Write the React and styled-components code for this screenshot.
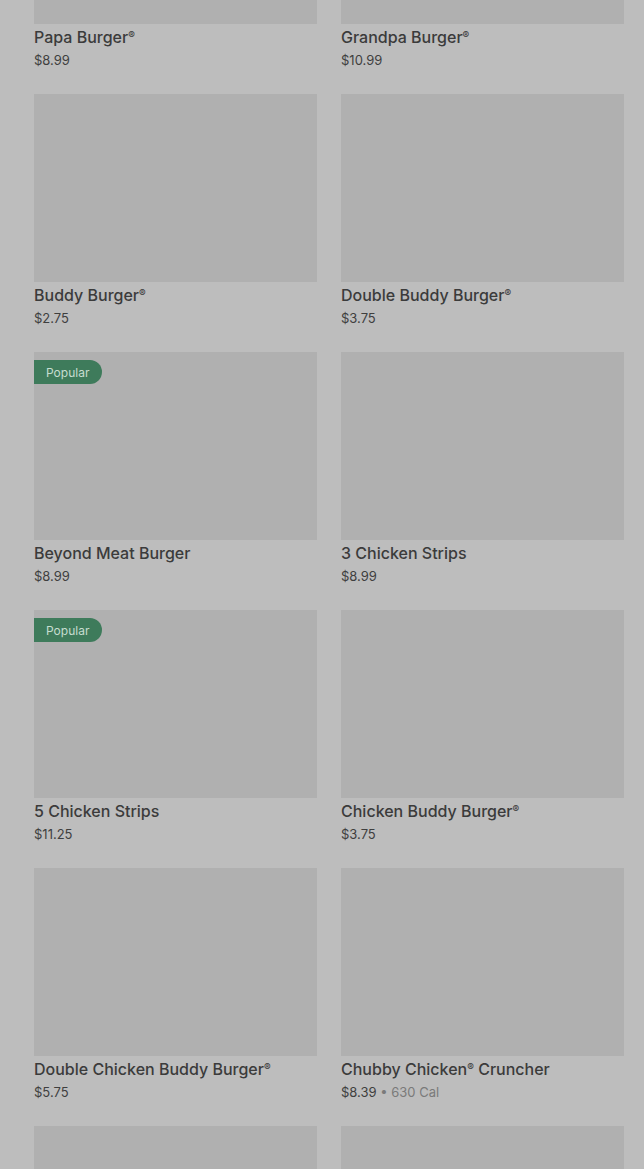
import React from "react";
import styled, { createGlobalStyle } from "styled-components";

const Global = createGlobalStyle`
  html, body { margin: 0; padding: 0; background: #bdbdbd; }
  body { font-family: Inter, "Noto Sans", Arial, sans-serif; overflow: hidden; }
`;

const Page = styled.div`
  width: 644px;
  height: 1169px;
  overflow: hidden;
  background: #bdbdbd;
`;

const Grid = styled.div`
  display: grid;
  grid-template-columns: 1fr 1fr;
  column-gap: 24px;
  row-gap: 23px;
  padding: 0 20px 0 34px;
  margin-top: -164px;
`;

const Card = styled.div`
  display: flex;
  flex-direction: column;
`;

const Thumb = styled.div`
  position: relative;
  height: 188px;
  background: #b0b0b0;
`;

const Badge = styled.span`
  position: absolute;
  top: 8px;
  left: 0;
  height: 24px;
  padding: 0 13px 0 12px;
  display: flex;
  align-items: center;
  background: #3e7b5b;
  color: #c6ddd0;
  font-size: 12px;
  border-radius: 0 12px 12px 0;
`;

const Info = styled.div`
  padding-top: 2px;
`;

const Title = styled.div`
  font-size: 16px;
  line-height: 22px;
  font-weight: 500;
  color: #3b3b3b;
  white-space: nowrap;
`;

const Meta = styled.div`
  margin-top: 1px;
  font-size: 13px;
  line-height: 22px;
  color: #3f3f3f;
`;

const Cal = styled.span`
  color: #7a7a7a;
`;

const Reg = styled.sup`
  font-size: 10px;
  vertical-align: top;
  position: relative;
  top: -2px;
`;

const items = [
  { name: "Papa Burger", reg: true, price: "$8.99" },
  { name: "Grandpa Burger", reg: true, price: "$10.99" },
  { name: "Buddy Burger", reg: true, price: "$2.75" },
  { name: "Double Buddy Burger", reg: true, price: "$3.75" },
  { name: "Beyond Meat Burger", price: "$8.99", popular: true },
  { name: "3 Chicken Strips", price: "$8.99" },
  { name: "5 Chicken Strips", price: "$11.25", popular: true },
  { name: "Chicken Buddy Burger", reg: true, price: "$3.75" },
  { name: "Double Chicken Buddy Burger", reg: true, price: "$5.75" },
  { name: "Chubby Chicken", after: " Cruncher", reg: true, price: "$8.39", cal: "630 Cal" },
  { name: "", price: "" },
  { name: "", price: "" },
];

export default function App() {
  return (
    <Page>
      <Global />
      <Grid>
        {items.map((it, i) => (
          <Card key={i}>
            <Thumb>{it.popular && <Badge>Popular</Badge>}</Thumb>
            <Info>
              <Title>
                {it.name}
                {it.reg && <Reg>®</Reg>}
                {it.after}
              </Title>
              <Meta>
                {it.price}
                {it.cal && <Cal> • {it.cal}</Cal>}
              </Meta>
            </Info>
          </Card>
        ))}
      </Grid>
    </Page>
  );
}
